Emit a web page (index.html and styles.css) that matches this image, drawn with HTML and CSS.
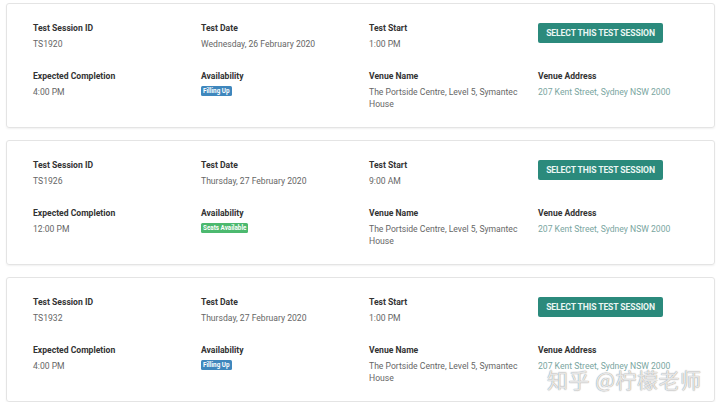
FILE: index.html
```html
<!DOCTYPE html>
<html>
<head>
<meta charset="utf-8">
<link rel="stylesheet" href="styles.css">
</head>
<body>
<div class="list">
  <div class="card">
    <div class="cell"><div class="label">Test Session ID</div><div class="value">TS1920</div></div>
    <div class="cell"><div class="label">Test Date</div><div class="value">Wednesday, 26 February 2020</div></div>
    <div class="cell"><div class="label">Test Start</div><div class="value">1:00 PM</div></div>
    <div class="cell"><button class="btn">SELECT THIS TEST SESSION</button></div>
    <div class="cell"><div class="label">Expected Completion</div><div class="value">4:00 PM</div></div>
    <div class="cell"><div class="label">Availability</div><div class="value"><span class="badge badge-blue">Filling Up</span></div></div>
    <div class="cell"><div class="label">Venue Name</div><div class="value">The Portside Centre, Level 5, Symantec House</div></div>
    <div class="cell"><div class="label">Venue Address</div><div class="value addr">207 Kent Street, Sydney NSW 2000</div></div>
  </div>
  <div class="card">
    <div class="cell"><div class="label">Test Session ID</div><div class="value">TS1926</div></div>
    <div class="cell"><div class="label">Test Date</div><div class="value">Thursday, 27 February 2020</div></div>
    <div class="cell"><div class="label">Test Start</div><div class="value">9:00 AM</div></div>
    <div class="cell"><button class="btn">SELECT THIS TEST SESSION</button></div>
    <div class="cell"><div class="label">Expected Completion</div><div class="value">12:00 PM</div></div>
    <div class="cell"><div class="label">Availability</div><div class="value"><span class="badge badge-green">Seats Available</span></div></div>
    <div class="cell"><div class="label">Venue Name</div><div class="value">The Portside Centre, Level 5, Symantec House</div></div>
    <div class="cell"><div class="label">Venue Address</div><div class="value addr">207 Kent Street, Sydney NSW 2000</div></div>
  </div>
  <div class="card">
    <div class="cell"><div class="label">Test Session ID</div><div class="value">TS1932</div></div>
    <div class="cell"><div class="label">Test Date</div><div class="value">Thursday, 27 February 2020</div></div>
    <div class="cell"><div class="label">Test Start</div><div class="value">1:00 PM</div></div>
    <div class="cell"><button class="btn">SELECT THIS TEST SESSION</button></div>
    <div class="cell"><div class="label">Expected Completion</div><div class="value">4:00 PM</div></div>
    <div class="cell"><div class="label">Availability</div><div class="value"><span class="badge badge-blue">Filling Up</span></div></div>
    <div class="cell"><div class="label">Venue Name</div><div class="value">The Portside Centre, Level 5, Symantec House</div></div>
    <div class="cell"><div class="label">Venue Address</div><div class="value addr">207 Kent Street, Sydney NSW 2000</div></div>
  </div>
</div>
<div class="watermark">知乎 @柠檬老师</div>
</body>
</html>
```
FILE: styles.css
```css
html, body {
  margin: 0;
  padding: 0;
  background: #ffffff;
  font-family: Roboto, "Liberation Sans", Arial, sans-serif;
}
.list {
  display: flex;
  flex-direction: column;
  gap: 12px;
  padding: 3px 5px 0 6px;
}
.card {
  box-sizing: border-box;
  height: 125px;
  border: 1px solid #e4e4e4;
  border-radius: 3px;
  box-shadow: 0 1px 2px rgba(0,0,0,0.06);
  padding: 18px 0 0 26px;
  display: grid;
  grid-template-columns: 168px 168px 169px 168px;
  grid-auto-rows: min-content;
  row-gap: 19px;
}
.label {
  font-size: 8.6px;
  font-weight: 700;
  color: #333;
  line-height: 12px;
}
.value {
  margin-top: 4px;
  font-size: 8.6px;
  color: #666;
  line-height: 12.5px;
  padding-right: 20px;
}
.addr {
  color: #7aa69f;
}
.btn {
  margin: 1px 0 0 0;
  height: 20px;
  width: 125px;
  padding: 0;
  border: none;
  border-radius: 2px;
  background: #2b8a7c;
  color: #eaf6f3;
  font-family: Roboto, "Liberation Sans", Arial, sans-serif;
  font-weight: 700;
  font-size: 8.6px;
  letter-spacing: -0.1px;
  display: block;
}
.badge {
  display: inline-block;
  font-size: 6.3px;
  font-weight: 700;
  color: #fff;
  line-height: 10px;
  height: 10px;
  padding: 0 2px;
  border-radius: 1.5px;
  vertical-align: top;
  margin-top: 0;
}
.badge-blue {
  background: #3f87bd;
}
.badge-green {
  background: #4cb96f;
}
.watermark {
  position: absolute;
  left: 547px;
  top: 364px;
  font-family: "Noto Sans CJK SC", sans-serif;
  font-size: 21px;
  color: rgba(255,255,255,0.8);
  text-shadow: 0 0 1px rgba(90,90,90,0.6), 0 0 1px rgba(90,90,90,0.4);
  letter-spacing: 0.5px;
  white-space: nowrap;
}
```
